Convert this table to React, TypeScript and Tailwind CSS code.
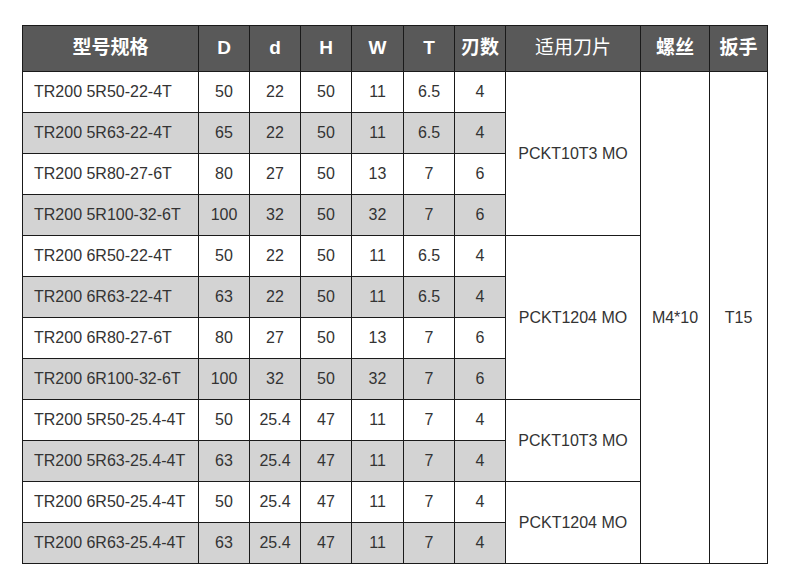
import React from "react";

type Row = { model: string; D: string; d: string; H: string; W: string; T: string; z: string };

const rows: Row[] = [
  { model: "TR200 5R50-22-4T", D: "50", d: "22", H: "50", W: "11", T: "6.5", z: "4" },
  { model: "TR200 5R63-22-4T", D: "65", d: "22", H: "50", W: "11", T: "6.5", z: "4" },
  { model: "TR200 5R80-27-6T", D: "80", d: "27", H: "50", W: "13", T: "7", z: "6" },
  { model: "TR200 5R100-32-6T", D: "100", d: "32", H: "50", W: "32", T: "7", z: "6" },
  { model: "TR200 6R50-22-4T", D: "50", d: "22", H: "50", W: "11", T: "6.5", z: "4" },
  { model: "TR200 6R63-22-4T", D: "63", d: "22", H: "50", W: "11", T: "6.5", z: "4" },
  { model: "TR200 6R80-27-6T", D: "80", d: "27", H: "50", W: "13", T: "7", z: "6" },
  { model: "TR200 6R100-32-6T", D: "100", d: "32", H: "50", W: "32", T: "7", z: "6" },
  { model: "TR200 5R50-25.4-4T", D: "50", d: "25.4", H: "47", W: "11", T: "7", z: "4" },
  { model: "TR200 5R63-25.4-4T", D: "63", d: "25.4", H: "47", W: "11", T: "7", z: "4" },
  { model: "TR200 6R50-25.4-4T", D: "50", d: "25.4", H: "47", W: "11", T: "7", z: "4" },
  { model: "TR200 6R63-25.4-4T", D: "63", d: "25.4", H: "47", W: "11", T: "7", z: "4" },
];

// insert groups: start row index -> [label, rowSpan]
const inserts: Record<number, [string, number]> = {
  0: ["PCKT10T3 MO", 4],
  4: ["PCKT1204 MO", 4],
  8: ["PCKT10T3 MO", 2],
  10: ["PCKT1204 MO", 2],
};

const cell = "border border-[#1a1a1a] text-center";

export default function App() {
  return (
    <div className="min-h-screen bg-white pt-[25px] pl-[22px] font-['Liberation_Sans','Noto_Sans_CJK_SC',sans-serif] text-[16px] text-[#333]">
      <table className="table-fixed border-collapse w-[746px]">
        <colgroup>
          <col className="w-[176px]" />
          <col className="w-[51px]" />
          <col className="w-[51px]" />
          <col className="w-[51px]" />
          <col className="w-[52px]" />
          <col className="w-[51px]" />
          <col className="w-[51px]" />
          <col className="w-[135px]" />
          <col className="w-[69px]" />
          <col className="w-[58px]" />
        </colgroup>
        <thead>
          <tr className="h-[46px] bg-[#595959] text-white text-[19px] font-bold">
            <th className={cell}>型号规格</th>
            <th className={cell}>D</th>
            <th className={cell}>d</th>
            <th className={cell}>H</th>
            <th className={cell}>W</th>
            <th className={cell}>T</th>
            <th className={cell}>刃数</th>
            <th className={`${cell} font-normal`}>适用刀片</th>
            <th className={cell}>螺丝</th>
            <th className={cell}>扳手</th>
          </tr>
        </thead>
        <tbody>
          {rows.map((r, i) => {
            const bg = i % 2 === 1 ? "bg-[#d3d3d3]" : "bg-white";
            const ins = inserts[i];
            return (
              <tr key={i} className="h-[41px]">
                <td className={`border border-[#1a1a1a] pl-[11px] text-left ${bg}`}>{r.model}</td>
                <td className={`${cell} ${bg}`}>{r.D}</td>
                <td className={`${cell} ${bg}`}>{r.d}</td>
                <td className={`${cell} ${bg}`}>{r.H}</td>
                <td className={`${cell} ${bg}`}>{r.W}</td>
                <td className={`${cell} ${bg}`}>{r.T}</td>
                <td className={`${cell} ${bg}`}>{r.z}</td>
                {ins && (
                  <td rowSpan={ins[1]} className={`${cell} bg-white`}>
                    {ins[0]}
                  </td>
                )}
                {i === 0 && (
                  <>
                    <td rowSpan={12} className={`${cell} bg-white`}>M4*10</td>
                    <td rowSpan={12} className={`${cell} bg-white`}>T15</td>
                  </>
                )}
              </tr>
            );
          })}
        </tbody>
      </table>
    </div>
  );
}
